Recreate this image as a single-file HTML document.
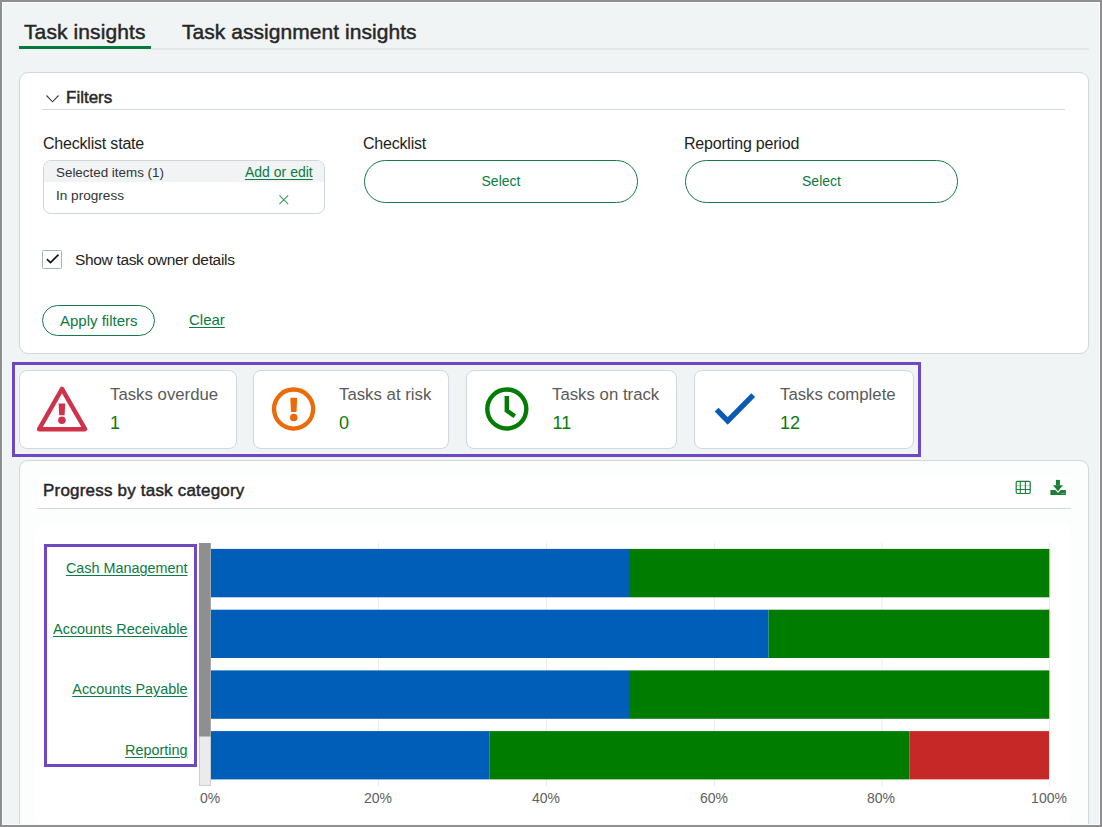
<!DOCTYPE html>
<html><head><meta charset="utf-8">
<style>
*{box-sizing:border-box;margin:0;padding:0}
html,body{width:1102px;height:827px;overflow:hidden}
body{background:#8f8f8f;position:relative;font-family:"Liberation Sans",sans-serif;color:#1e1e1e}
#frame{position:absolute;left:2px;top:2px;width:1098px;height:823px;background:#f1f4f5;overflow:hidden;box-shadow:inset 1px 1px 0 #fbfcfd,inset -1px -1px 0 #fbfcfd}
.a{position:absolute}
.t{position:absolute;white-space:nowrap;line-height:1}
.hd{font-weight:400;color:#262626;-webkit-text-stroke:0.45px #262626}
.card{position:absolute;background:#fff;border:1px solid #cfd8de;border-radius:9px}
.btn{position:absolute;border:1px solid #137a48;border-radius:22px;background:#fff}
.g{color:#0b7a43}
.u{text-decoration:underline;text-underline-offset:2px;text-decoration-thickness:1px}
.kt{font-size:16.8px;color:#5a5a5a;margin-top:1.6px}
.kn{font-size:18px;color:#087d08}
.lab{position:absolute;right:0;white-space:nowrap;line-height:1;font-size:14.4px;color:#0b7a43;text-decoration:underline;text-underline-offset:2px}
.ax{position:absolute;white-space:nowrap;line-height:1;font-size:14px;color:#606060;transform:translateX(-50%)}
.grid{position:absolute;top:541px;width:1px;height:245px;background:#ececec}
.bar{position:absolute;height:48px}
</style></head>
<body>
<div id="frame"></div>

<!-- tabs -->
<div class="t hd" style="left:24px;top:20.5px;font-size:21px;letter-spacing:0.1px">Task insights</div>
<div class="t hd" style="left:182px;top:20.5px;font-size:21px;letter-spacing:0.05px">Task assignment insights</div>
<div class="a" style="left:19px;top:46px;width:132px;height:3px;background:#007a3d"></div>
<div class="a" style="left:151px;top:48px;width:938px;height:2px;background:#e3e7ea"></div>

<!-- filters card -->
<div class="card" style="left:19px;top:72px;width:1070px;height:282px"></div>
<svg class="a" style="left:45px;top:94px" width="15" height="10" viewBox="0 0 15 10"><path d="M1.5 1.5 L7.5 7.8 L13.5 1.5" fill="none" stroke="#3a3a3a" stroke-width="1.1"/></svg>
<div class="t hd" style="left:66px;top:89px;font-size:17px">Filters</div>
<div class="a" style="left:42px;top:109px;width:1023px;height:1px;background:#d3dade"></div>

<div class="t" style="left:43px;top:135.5px;font-size:16px;letter-spacing:-0.2px">Checklist state</div>
<div class="a" style="left:43px;top:160px;width:282px;height:54px;border:1px solid #cfd6db;border-radius:8px;overflow:hidden;background:#fff">
  <div class="a" style="left:0;top:0;width:100%;height:21px;background:#f1f3f5"></div>
</div>
<div class="t" style="left:56px;top:166px;font-size:13.4px;color:#333">Selected items (1)</div>
<div class="t g u" style="left:245px;top:165px;font-size:14px">Add or edit</div>
<div class="t" style="left:56px;top:189px;font-size:13.6px;color:#333">In progress</div>
<svg class="a" style="left:278px;top:194px" width="12" height="12" viewBox="0 0 12 12"><path d="M1.4 1.4 L10.2 10.2 M10.2 1.4 L1.4 10.2" stroke="#3d9a6c" stroke-width="1.1"/></svg>

<div class="t" style="left:363px;top:135.5px;font-size:16px;letter-spacing:-0.2px">Checklist</div>
<div class="btn" style="left:364px;top:160px;width:274px;height:43px"></div>
<div class="t g" style="left:364px;width:274px;text-align:center;top:174px;font-size:14px">Select</div>

<div class="t" style="left:684px;top:135.5px;font-size:16px;letter-spacing:-0.2px">Reporting period</div>
<div class="btn" style="left:685px;top:160px;width:273px;height:43px"></div>
<div class="t g" style="left:685px;width:273px;text-align:center;top:174px;font-size:14px">Select</div>

<div class="a" style="left:42px;top:250px;width:20px;height:19px;border:1px solid #a9b4ba;border-radius:1.5px;background:#fff"></div>
<svg class="a" style="left:42px;top:250px" width="20" height="19" viewBox="0 0 20 19"><path d="M4.9 9.2 L8.5 12.6 L16.5 4.6" fill="none" stroke="#111" stroke-width="1.6"/></svg>
<div class="t" style="left:75px;top:251.5px;font-size:15.5px;letter-spacing:-0.33px;color:#222">Show task owner details</div>

<div class="btn" style="left:42px;top:305px;width:113px;height:31px;border-radius:16px"></div>
<div class="t g" style="left:60px;top:312.5px;font-size:15px">Apply filters</div>
<div class="t g u" style="left:189px;top:312px;font-size:15px">Clear</div>

<!-- KPI -->
<div class="a" style="left:12px;top:362px;width:909px;height:95px;border:3px solid #6e48c2"></div>
<div class="card" style="left:19px;top:370px;width:218px;height:79px;border-radius:8px"></div>
<div class="card" style="left:253px;top:370px;width:196px;height:79px;border-radius:8px"></div>
<div class="card" style="left:466px;top:370px;width:211px;height:79px;border-radius:8px"></div>
<div class="card" style="left:694px;top:370px;width:220px;height:79px;border-radius:8px"></div>

<svg class="a" style="left:34px;top:384px" width="56" height="50" viewBox="0 0 56 50">
  <path d="M28 4.8 L51.1 45.2 L5.1 45.2 Z" fill="none" stroke="#cf3349" stroke-width="4.4" stroke-linejoin="round"/>
  <path d="M24.6 19.6 H31.2 L30.6 31.2 H25.2 Z" fill="#cf3349"/>
  <circle cx="27.9" cy="36.2" r="3.8" fill="#cf3349"/>
</svg>
<div class="t kt" style="left:110px;top:385px">Tasks overdue</div>
<div class="t kn" style="left:110px;top:414px">1</div>

<svg class="a" style="left:270px;top:385px" width="48" height="48" viewBox="0 0 48 48">
  <circle cx="23.6" cy="24" r="19.55" fill="none" stroke="#ec6a08" stroke-width="4.35"/>
  <path d="M20.3 12.8 H27.2 L26.5 26.9 H21 Z" fill="#ec6a08"/>
  <circle cx="23.75" cy="32.55" r="3.8" fill="#ec6a08"/>
</svg>
<div class="t kt" style="left:339px;top:385px">Tasks at risk</div>
<div class="t kn" style="left:339px;top:414px">0</div>

<svg class="a" style="left:483px;top:385px" width="48" height="48" viewBox="0 0 48 48">
  <circle cx="23.8" cy="24" r="19.5" fill="none" stroke="#007d00" stroke-width="4.4"/>
  <path d="M23.8 11 V25.6 L31.8 31.3" fill="none" stroke="#007d00" stroke-width="4.4"/>
</svg>
<div class="t kt" style="left:552px;top:385px">Tasks on track</div>
<div class="t kn" style="left:552.5px;top:414px">11</div>

<svg class="a" style="left:710px;top:390px" width="50" height="40" viewBox="0 0 50 40">
  <path d="M6.6 19.6 L17.7 30.9 L43.2 5.1" fill="none" stroke="#0b5bb6" stroke-width="5.3"/>
</svg>
<div class="t kt" style="left:780px;top:385px">Tasks complete</div>
<div class="t kn" style="left:780px;top:414px">12</div>

<!-- chart card -->
<div class="card" style="left:19px;top:460px;width:1070px;height:400px;background:#fcfdfd"></div>
<div class="a" style="left:37px;top:477px;width:1034px;height:32px;background:#fff;border-radius:6px 6px 0 0"></div>
<div class="a" style="left:35px;top:525px;width:1035px;height:300px;background:#fff;border-radius:6px"></div>
<div class="t hd" style="left:43px;top:482px;font-size:17px;letter-spacing:0.2px">Progress by task category</div>
<div class="a" style="left:37px;top:508px;width:1034px;height:1px;background:#d3dade"></div>

<svg class="a" style="left:1015px;top:480px" width="16" height="15" viewBox="0 0 16 15">
  <rect x="1.2" y="1.4" width="14" height="12.1" rx="1.2" fill="none" stroke="#1a8038" stroke-width="1.2"/>
  <path d="M5.3 1 V14 M10.4 1 V14 M1 9.5 H15.5" stroke="#1a8038" stroke-width="1.1"/>
  <path d="M1 5.7 H15.5" stroke="#1a8038" stroke-width="1" opacity="0.3"/>
</svg>
<svg class="a" style="left:1049px;top:479px" width="18" height="17" viewBox="0 0 18 17">
  <rect x="6.9" y="0.9" width="4" height="5.6" fill="#1a8038"/>
  <path d="M3.9 6.2 H14 L9 12.3 Z" fill="#1a8038"/>
  <path d="M1.4 10.9 H6.3 L9 14.1 L11.7 10.9 H16.9 V15.9 H1.4 Z" fill="#1a8038"/>
  <circle cx="13" cy="14.5" r="0.6" fill="#fff" opacity="0.7"/><circle cx="15" cy="14.5" r="0.6" fill="#fff" opacity="0.7"/>
</svg>

<!-- chart svg -->
<svg class="a" style="left:0;top:0" width="1102" height="827" viewBox="0 0 1102 827">
  <g fill="#ececec">
    <rect x="378" y="543" width="1" height="243"/>
    <rect x="546" y="543" width="1" height="243"/>
    <rect x="714" y="543" width="1" height="243"/>
    <rect x="881.5" y="543" width="1" height="243"/>
    <rect x="1049" y="543" width="1" height="243"/>
  </g>
  <g fill="#005eb8">
    <rect x="211" y="548.9" width="418" height="48.4"/>
    <rect x="211" y="609.7" width="557.6" height="48.3"/>
    <rect x="211" y="670.4" width="418" height="48.4"/>
    <rect x="211" y="731.1" width="278.7" height="48.3"/>
  </g>
  <g fill="#007d00">
    <rect x="629" y="548.9" width="420" height="48.4"/>
    <rect x="768.6" y="609.7" width="280.4" height="48.3"/>
    <rect x="629" y="670.4" width="420" height="48.4"/>
    <rect x="489.7" y="731.1" width="419.6" height="48.3"/>
  </g>
  <rect x="909.3" y="731.1" width="139.7" height="48.3" fill="#c62828"/>
  <g fill="#f2a98a">
    <rect x="1049" y="548.9" width="1.3" height="48.4"/>
    <rect x="1049" y="609.7" width="1.3" height="48.3"/>
    <rect x="1049" y="670.4" width="1.3" height="48.4"/>
  </g>
  <rect x="199.5" y="543.5" width="11" height="242" fill="#ebebeb" stroke="#cdcdcd" stroke-width="1"/>
  <rect x="199" y="543" width="11.6" height="193.5" fill="#8f8f8f"/>
</svg>

<!-- labels -->
<div class="a" style="left:44px;top:544px;width:153px;height:223px;border:3px solid #6e48c2"></div>
<div class="a" style="left:0;top:0;width:187.5px;height:827px">
  <div class="lab" style="top:561px">Cash Management</div>
  <div class="lab" style="top:622px">Accounts Receivable</div>
  <div class="lab" style="top:682px">Accounts Payable</div>
  <div class="lab" style="top:743px">Reporting</div>
</div>

<div class="ax" style="left:210px;top:791px">0%</div>
<div class="ax" style="left:378px;top:791px">20%</div>
<div class="ax" style="left:546px;top:791px">40%</div>
<div class="ax" style="left:714px;top:791px">60%</div>
<div class="ax" style="left:881px;top:791px">80%</div>
<div class="ax" style="left:1049px;top:791px">100%</div>

<!-- frame border -->
<div class="a" style="left:2px;top:824px;width:1098px;height:1px;background:#fcfdfd"></div>
<div class="a" style="left:0;top:0;width:1102px;height:827px;border:2px solid #8f8f8f;pointer-events:none"></div>
</body></html>
